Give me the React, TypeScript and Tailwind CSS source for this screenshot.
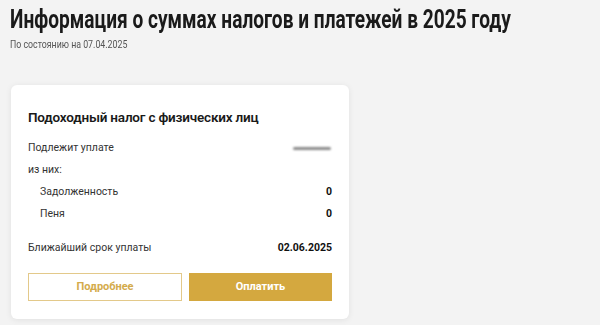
export default function App() {
  return (
    <div className="h-[325px] w-[600px] overflow-hidden bg-[#f3f3f3] px-[10px] pt-[3px] font-['Roboto',sans-serif] text-[#1a1a1a]">
      <h1 className="origin-left scale-x-[0.765] whitespace-nowrap text-[25px] font-bold leading-[34px]">
        Информация о суммах налогов и платежей в 2025 году
      </h1>
      <p className="mt-[1px] origin-left scale-x-[0.8] whitespace-nowrap text-[11px] leading-[14px] text-[#555]">
        По состоянию на 07.04.2025
      </p>

      <div className="ml-[1px] mt-[33px] w-[338px] rounded-[6px] bg-white px-[17px] pb-[18px] pt-[23px] shadow-[0_1px_6px_rgba(0,0,0,0.08)]">
        <h2 className="text-[13.5px] font-semibold leading-[18px] tracking-[-0.2px]">Подоходный налог с физических лиц</h2>

        <div className="mt-[11px] text-[10.5px] leading-[22px] text-[#333]">
          <div className="flex items-center justify-between">
            <span>Подлежит уплате</span>
            <span className="mr-[1px] h-[3px] w-[38px] rounded-full bg-[#8a8a8a] blur-[1px]" />
          </div>
          <div>из них:</div>
          <div className="flex justify-between pl-[12px]">
            <span>Задолженность</span>
            <span className="font-bold text-[#111]">0</span>
          </div>
          <div className="flex justify-between pl-[12px]">
            <span>Пеня</span>
            <span className="font-bold text-[#111]">0</span>
          </div>
          <div className="mt-[12px] flex justify-between">
            <span>Ближайший срок уплаты</span>
            <span className="font-bold text-[#111]">02.06.2025</span>
          </div>
        </div>

        <div className="mt-[14px] flex gap-[7px]">
          <button className="h-[28px] w-[154px] border border-[#e3c98a] bg-white text-[11px] font-bold text-[#d4ab4c]">
            Подробнее
          </button>
          <button className="h-[28px] flex-1 bg-[#d4a83f] text-[11px] font-bold text-white">Оплатить</button>
        </div>
      </div>
    </div>
  );
}
